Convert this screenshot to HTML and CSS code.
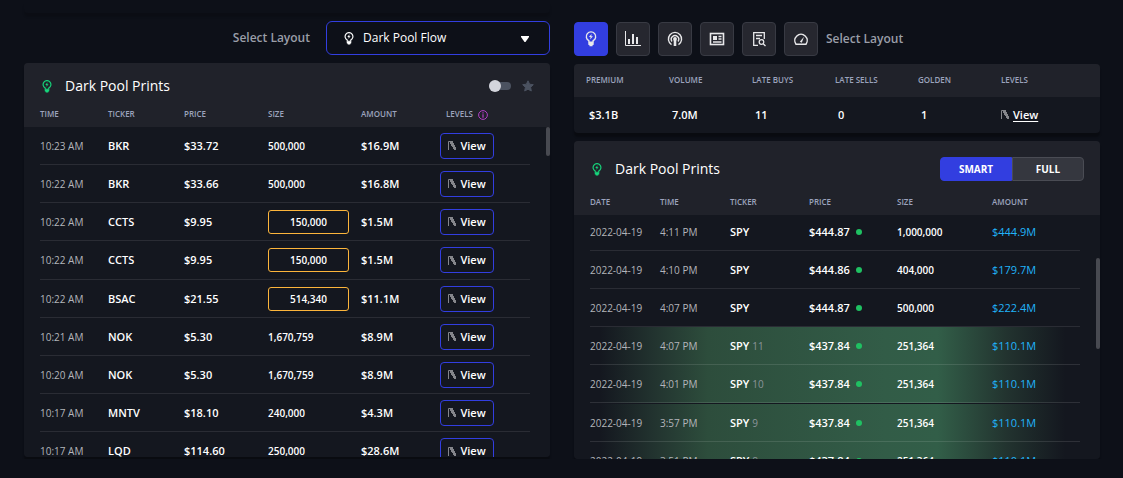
FILE: index.html
```html
<!DOCTYPE html>
<html lang="en">
<head>
<meta charset="utf-8">
<title>Dark Pool Flow</title>
<link rel="stylesheet" href="styles.css">
</head>
<body>
<svg class="defs" aria-hidden="true">
  <symbol id="bulb" viewBox="0 0 20 26"><path d="M6.500 18.500v-2.600A7.800 7.800 0 1 1 13.500 15.900v2.600z" fill="none" stroke="currentColor" stroke-width="2.300" stroke-linejoin="round"/><path d="M5.500 19h9v3.500l-2 1V25h-5v-1.500l-2-1z" fill="currentColor"/><path d="M11 4.500 6.500 9.800h2.800l-.6 3.900 4.500-5.300h-2.800z" fill="currentColor"/></symbol>
  <symbol id="trend" viewBox="0 0 8 9"><path d="M.5 9V.5H2" fill="none" stroke="currentColor"/><path d="M2 0h3v2h1v2h1v2h1v3H6V8H5V6H4V5H3V3H2z" fill="currentColor"/></symbol>
</svg>
<main class="page">
  <section class="column column-left">
    <div class="strip"></div>
    <div class="toolbar toolbar-end">
      <label class="label" for="layout">Select Layout</label>
      <div class="picker">
        <svg class="picker-icon"><use href="#bulb"/></svg>
        <select id="layout"><option>Dark Pool Flow</option></select>
        <svg class="caret" viewBox="0 0 8 6"><path d="M0 0h8v1L4.500 6h-1L0 1z" fill="#fff"/></svg>
      </div>
    </div>
    <article class="panel feed feed-left">
      <header class="panel-head">
        <svg class="panel-icon"><use href="#bulb"/></svg>
        <h2>Dark Pool Prints</h2>
        <div class="tools">
          <input type="checkbox" class="toggle" aria-label="Live updates">
          <button class="star" aria-label="Favourite"><svg viewBox="0 0 12 12"><path d="M6 .8 7.600 4.200l3.700.5-2.700 2.600.7 3.700L6 9.200 2.700 11l.7-3.700L.7 4.700l3.700-.5z" fill="#4b5260" stroke="#4b5260" stroke-linejoin="round"/></svg></button>
        </div>
      </header>
      <table class="prints">
        <colgroup><col class="w68"><col class="w76"><col class="w84"><col class="w93"><col class="w79"><col class="w90"></colgroup>
        <thead><tr><th>Time</th><th>Ticker</th><th>Price</th><th>Size</th><th>Amount</th><th class="levels">Levels <svg class="info" viewBox="0 0 10 10"><circle cx="5" cy="5" r="4.400" fill="none" stroke="#b13fc4"/><path d="M5 4.200v3.500M5 2.200v1.200" stroke="#b13fc4" stroke-width="1.200"/></svg></th></tr></thead>
        <tbody>
          <tr><td class="when">10:23 AM</td><td>BKR</td><td>$33.72</td><td class="size">500,000</td><td>$16.9M</td><td><button class="view"><svg><use href="#trend"/></svg>View</button></td></tr>
          <tr><td class="when">10:22 AM</td><td>BKR</td><td>$33.66</td><td class="size">500,000</td><td>$16.8M</td><td><button class="view"><svg><use href="#trend"/></svg>View</button></td></tr>
          <tr><td class="when">10:22 AM</td><td>CCTS</td><td>$9.95</td><td class="size"><span class="flag">150,000</span></td><td>$1.5M</td><td><button class="view"><svg><use href="#trend"/></svg>View</button></td></tr>
          <tr class="tall"><td class="when">10:22 AM</td><td>CCTS</td><td>$9.95</td><td class="size"><span class="flag">150,000</span></td><td>$1.5M</td><td><button class="view"><svg><use href="#trend"/></svg>View</button></td></tr>
          <tr><td class="when">10:22 AM</td><td>BSAC</td><td>$21.55</td><td class="size"><span class="flag">514,340</span></td><td>$11.1M</td><td><button class="view"><svg><use href="#trend"/></svg>View</button></td></tr>
          <tr><td class="when">10:21 AM</td><td>NOK</td><td>$5.30</td><td class="size">1,670,759</td><td>$8.9M</td><td><button class="view"><svg><use href="#trend"/></svg>View</button></td></tr>
          <tr><td class="when">10:20 AM</td><td>NOK</td><td>$5.30</td><td class="size">1,670,759</td><td>$8.9M</td><td><button class="view"><svg><use href="#trend"/></svg>View</button></td></tr>
          <tr><td class="when">10:17 AM</td><td>MNTV</td><td>$18.10</td><td class="size">240,000</td><td>$4.3M</td><td><button class="view"><svg><use href="#trend"/></svg>View</button></td></tr>
          <tr class="tall"><td class="when">10:17 AM</td><td>LQD</td><td>$114.60</td><td class="size">250,000</td><td>$28.6M</td><td><button class="view"><svg><use href="#trend"/></svg>View</button></td></tr>
        </tbody>
      </table>
      <div class="thumb thumb-left"></div>
    </article>
    <div class="grip"></div>
  </section>

  <section class="column column-right">
    <div class="toolbar">
      <button class="tile active" aria-label="Dark pool"><svg class="tile-bulb"><use href="#bulb"/></svg></button>
      <button class="tile" aria-label="Chart"><svg class="tile-chart" viewBox="0 0 16 16" fill="none" stroke="currentColor"><path d="M.5 0v14.500H16"/><path d="M4 13V8M8 13V3M12 13V6" stroke-width="2"/></svg></button>
      <button class="tile" aria-label="Broadcast"><svg viewBox="0 0 16 16" fill="none" stroke="currentColor" stroke-width="1.400"><path d="M4.500 13.600a6.600 6.600 0 1 1 7 0"/><path d="M5 10.500a3.700 3.700 0 1 1 6 0"/><circle cx="8" cy="8" r="1.200" fill="currentColor"/><path d="M8 9v6" stroke-width="2.600"/></svg></button>
      <button class="tile" aria-label="News"><svg viewBox="0 0 16 16" fill="none" stroke="currentColor" stroke-width="1.600"><rect x="1.500" y="2.500" width="13" height="11"/><path d="M4 5h4v4H4z" fill="currentColor" stroke="none"/><path d="M9.500 5.500h3M9.500 8h3M4 11h8.500" stroke-width="1.300"/></svg></button>
      <button class="tile" aria-label="Report search"><svg viewBox="0 0 16 16" fill="none" stroke="currentColor" stroke-width="1.300"><path d="M7 14.400H2.700V1.600h10.600V8M5 4.500h6M5 7.500h4"/><circle cx="10.500" cy="11" r="2.300"/><path d="m12.200 12.700 2.300 2.300"/></svg></button>
      <button class="tile" aria-label="Gauge"><svg viewBox="0 0 16 16" fill="none" stroke="currentColor" stroke-width="1.500"><path d="M3 13.200a6.200 6.200 0 1 1 10 0z" stroke-linejoin="round"/><path d="m6.800 10.800 4.200-5-2.200 6z" fill="currentColor" stroke="none"/></svg></button>
      <span class="label">Select Layout</span>
    </div>
    <article class="panel summary">
      <table class="stats">
        <thead><tr><th>Premium</th><th>Volume</th><th>Late Buys</th><th>Late Sells</th><th>Golden</th><th>Levels</th></tr></thead>
        <tbody><tr><td>$3.1B</td><td>7.0M</td><td>11</td><td>0</td><td>1</td><td class="link-cell"><svg class="trend"><use href="#trend"/></svg><a href="#">View</a></td></tr></tbody>
      </table>
    </article>
    <article class="panel feed feed-right">
      <header class="panel-head">
        <svg class="panel-icon"><use href="#bulb"/></svg>
        <h2>Dark Pool Prints</h2>
        <div class="segment"><button class="on" aria-pressed="true">SMART</button><button aria-pressed="false">FULL</button></div>
      </header>
      <table class="prints">
        <colgroup><col class="w70"><col class="w70"><col class="w79"><col class="w88"><col class="w95"><col class="w88"></colgroup>
        <thead><tr><th>Date</th><th>Time</th><th>Ticker</th><th>Price</th><th>Size</th><th>Amount</th></tr></thead>
        <tbody>
          <tr><td class="when">2022-04-19</td><td class="when">4:11 PM</td><td>SPY</td><td>$444.87<i class="dot"></i></td><td class="size">1,000,000</td><td class="amount">$444.9M</td></tr>
          <tr><td class="when">2022-04-19</td><td class="when">4:10 PM</td><td>SPY</td><td>$444.86<i class="dot"></i></td><td class="size">404,000</td><td class="amount">$179.7M</td></tr>
          <tr><td class="when">2022-04-19</td><td class="when">4:07 PM</td><td>SPY</td><td>$444.87<i class="dot"></i></td><td class="size">500,000</td><td class="amount">$222.4M</td></tr>
          <tr class="hot"><td class="when">2022-04-19</td><td class="when">4:07 PM</td><td>SPY <small>11</small></td><td>$437.84<i class="dot"></i></td><td class="size">251,364</td><td class="amount">$110.1M</td></tr>
          <tr class="hot"><td class="when">2022-04-19</td><td class="when">4:01 PM</td><td>SPY <small>10</small></td><td>$437.84<i class="dot"></i></td><td class="size">251,364</td><td class="amount">$110.1M</td></tr>
          <tr class="hot tall"><td class="when">2022-04-19</td><td class="when">3:57 PM</td><td>SPY <small>9</small></td><td>$437.84<i class="dot"></i></td><td class="size">251,364</td><td class="amount">$110.1M</td></tr>
          <tr class="hot"><td class="when">2022-04-19</td><td class="when">3:51 PM</td><td>SPY <small>8</small></td><td>$437.84<i class="dot"></i></td><td class="size">251,364</td><td class="amount">$110.1M</td></tr>
        </tbody>
      </table>
      <div class="thumb thumb-right"></div>
    </article>
  </section>
</main>
</body>
</html>
```

FILE: styles.css
```css
* { box-sizing: border-box; }
body { margin: 0; background: #0d1018; color: #fff; font: 500 11px/16px "Open Sans", "Noto Sans", sans-serif; overflow: hidden; }
button, select { font: inherit; color: inherit; margin: 0; }
svg { display: block; flex: none; }
.defs { position: absolute; width: 0; height: 0; }

.page { display: grid; grid-template-columns: 1fr 1fr; gap: 24px; padding: 0 23px 0 24px; align-items: start; }
.column { position: relative; display: flex; flex-direction: column; gap: 8px; }
.column-right { padding-top: 22px; }
.strip { height: 13px; border-radius: 4px; box-shadow: 0 4px 2px rgba(0, 0, 0, .14); }
.toolbar { display: flex; align-items: center; gap: 8px; height: 34px; }
.toolbar-end { justify-content: flex-end; gap: 16px; }
.label { color: #9a9ea8; font-size: 12px; font-weight: 600; }

.picker { position: relative; width: 224px; height: 34px; }
.picker select { width: 100%; height: 100%; padding: 0 36px; appearance: none; background: #0d1018; border: 1px solid #323ee0; border-radius: 6px; font-size: 12px; font-weight: 500; }
.picker-icon { position: absolute; left: 18px; top: 11px; width: 10px; height: 13px; }
.caret { position: absolute; right: 21px; top: 15px; width: 8px; height: 6px; }

.tile { display: grid; place-items: center; width: 34px; height: 34px; padding: 0; background: #26272f; border: 1px solid #383a43; border-radius: 4px; color: #e8e8ea; }
.tile svg { width: 16px; height: 16px; }
.tile .tile-bulb { width: 12px; height: 16px; }
.tile.active { background: #323ee0; border-color: #323ee0; }

.panel { position: relative; border-radius: 4px; box-shadow: 0 4px 2px rgba(0, 0, 0, .3); }
.feed { overflow: hidden; padding: 0 20px 0 16px; }
.feed-left { height: 394px; background: linear-gradient(#20222a 64px, #14171f 64px); }
.feed-right { height: 318px; background: linear-gradient(#20222a 74px, #14171f 74px); }
.panel-head { display: flex; align-items: center; height: 46px; }
.feed-right .panel-head { height: 56px; }
.panel-icon { width: 10px; height: 13px; margin: 0 13px 0 2px; color: #16d47b; }
h2 { margin: 0; font-size: 14px; font-weight: 500; line-height: 20px; }
.tools { display: flex; align-items: center; gap: 11px; margin-left: auto; margin-right: -4px; }
.toggle { position: relative; appearance: none; width: 22px; height: 8px; margin: 0; border-radius: 4px; background: #4b5260; }
.toggle::before { content: ""; position: absolute; left: 0; top: -2px; width: 12px; height: 12px; border-radius: 50%; background: #d3d5dc; }
.star { width: 12px; height: 12px; padding: 0; background: none; border: 0; }
.star svg { width: 12px; height: 12px; }
.segment { display: flex; width: 144px; height: 24px; margin-left: auto; margin-right: -4px; }
.segment button { flex: 1; padding: 0; background: #35373f; border: 1px solid #4a4c54; border-radius: 0 4px 4px 0; font-size: 10px; font-weight: 700; }
.segment .on { background: #323ee0; border-color: #323ee0; border-radius: 4px 0 0 4px; }

table { width: 100%; table-layout: fixed; border-collapse: collapse; }
th { padding: 0; color: #9ca2bd; font-size: 8px; font-weight: 600; line-height: 10px; text-align: left; text-transform: uppercase; white-space: nowrap; }
td { padding: 0; white-space: nowrap; }
.prints th { height: 17px; padding-bottom: 7px; }
.feed-right .prints th { height: 16px; padding-bottom: 6px; }
.prints td { height: 38px; }
.prints .tall td { height: 39px; }
.prints tbody tr { background-image: linear-gradient(#2a2c34, #2a2c34); background-size: 100% 1px; background-position: bottom; background-repeat: no-repeat; }
.prints tbody .hot { background-image: linear-gradient(rgba(255, 255, 255, .11), rgba(255, 255, 255, .11)), linear-gradient(90deg, transparent 2%, #22332f 13%, #2d4d3c 24%, #325c47 60%, #325e48 71%, #22332f 85%, transparent 97%); background-size: 100% 1px, 100% 100%; }
.prints tbody .hot.tall { background-size: 100% 1px, 100% 38px; }
.w68 { width: 68px; } .w70 { width: 70px; } .w76 { width: 76px; } .w79 { width: 79px; } .w84 { width: 84px; }
.w88 { width: 88px; } .w90 { width: 90px; } .w93 { width: 93px; } .w95 { width: 95px; }
td { font-weight: 600; }
td.when { color: #b3b5ba; font-size: 10px; font-weight: 400; }
td.size { font-size: 10px; }
td.amount { color: #20b4fa; font-weight: 500; }
small { color: #8b949a; font-size: 10px; font-weight: 400; }
.levels { padding-left: 6px; }
.info { display: inline-block; width: 10px; height: 10px; margin-left: 3px; vertical-align: middle; }
.flag { display: block; width: 81px; height: 24px; border: 1px solid #fcb53b; border-radius: 3px; line-height: 22px; text-align: center; }
.view { display: flex; align-items: center; justify-content: center; gap: 4px; width: 54px; height: 26px; padding: 0; background: none; border: 1px solid #323ee0; border-radius: 4px; }
.view svg, .trend { width: 8px; height: 9px; color: #85868b; }
.dot { display: inline-block; width: 6px; height: 6px; margin-left: 6px; border-radius: 50%; background: #1fc162; vertical-align: 1px; }

.thumb { position: absolute; right: 0; width: 4px; border-radius: 2px; background: #484a51; }
.thumb-left { top: 64px; height: 29px; }
.thumb-right { top: 117px; height: 91px; }
.grip { position: absolute; right: -5px; bottom: -6px; border: 2px solid; border-color: transparent #3a3d45 #3a3d45 transparent; }

.summary { overflow: hidden; background: #14171f; }
.stats thead { background: #20222a; }
.stats th { height: 33px; padding: 0 0 2px 12px; width: 83px; }
.stats th:last-child { width: 111px; }
.stats td { height: 36px; padding-left: 15px; }
.stats td.link-cell { padding-left: 12px; }
.trend { display: inline-block; margin-right: 4px; }
a { color: #fff; text-underline-offset: 2px; }
```
